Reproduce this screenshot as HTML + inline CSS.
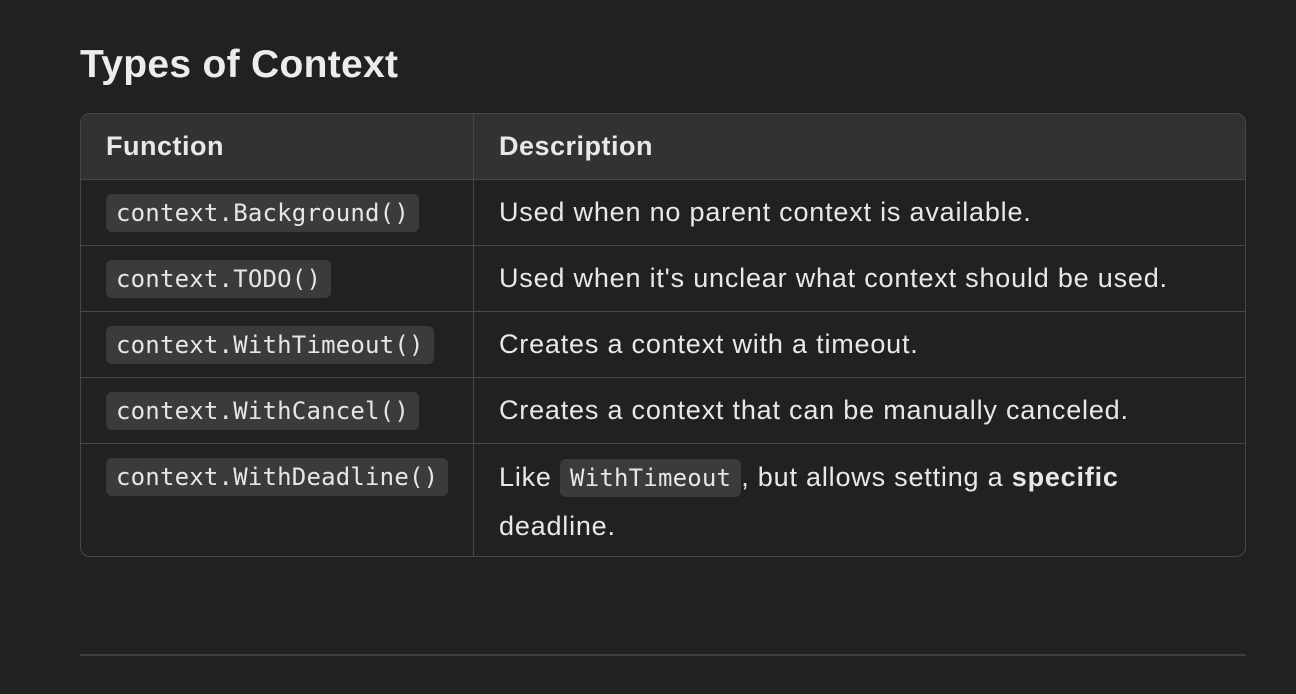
<!DOCTYPE html>
<html><head><style>
body{margin:0;background:#212121;width:1296px;height:694px;overflow:hidden;font-family:"Liberation Sans",sans-serif;color:#e8e8e8}
h2{position:absolute;left:80px;top:40px;margin:0;font-size:39px;font-weight:bold;color:#ececec;line-height:50px;letter-spacing:0.3px}
.t{position:absolute;left:80px;top:113px;width:1164px;border:1px solid #474747;border-radius:10px;overflow:hidden}
.r{display:flex;border-top:1px solid #474747;height:65px;align-items:stretch}
.r:first-child{border-top:none;background:#323232;height:65px}
.c1{width:393px;border-right:1px solid #474747;padding-left:25px;box-sizing:border-box;display:flex;align-items:center}
.c2{flex:1;padding-left:25px;display:flex;align-items:center;font-size:27px;letter-spacing:0.8px}
.h{font-weight:bold;font-size:27px;letter-spacing:0.5px}
code{font-family:"DejaVu Sans Mono","Liberation Mono",monospace;font-size:24px;letter-spacing:0.2px;background:#3b3b3b;border-radius:6px;padding:5px 10px;color:#e6e6e6}
.last{height:112px}
.last .c1{align-items:flex-start;padding-top:14px}
.last .c2{line-height:48px;padding-top:9px;display:block}
hr{position:absolute;left:80px;top:654px;width:1166px;margin:0;border:none;border-top:2px solid #3e3e3e}
</style></head><body>
<h2>Types of Context</h2>
<div class="t">
<div class="r"><div class="c1 h">Function</div><div class="c2 h">Description</div></div>
<div class="r"><div class="c1"><code>context.Background()</code></div><div class="c2">Used when no parent context is available.</div></div>
<div class="r"><div class="c1"><code>context.TODO()</code></div><div class="c2">Used when it's unclear what context should be used.</div></div>
<div class="r"><div class="c1"><code>context.WithTimeout()</code></div><div class="c2">Creates a context with a timeout.</div></div>
<div class="r"><div class="c1"><code>context.WithCancel()</code></div><div class="c2">Creates a context that can be manually canceled.</div></div>
<div class="r last"><div class="c1"><code>context.WithDeadline()</code></div><div class="c2">Like <code>WithTimeout</code>, but allows setting a <b>specific</b><br>deadline.</div></div>
</div>
<hr>
</body></html>
